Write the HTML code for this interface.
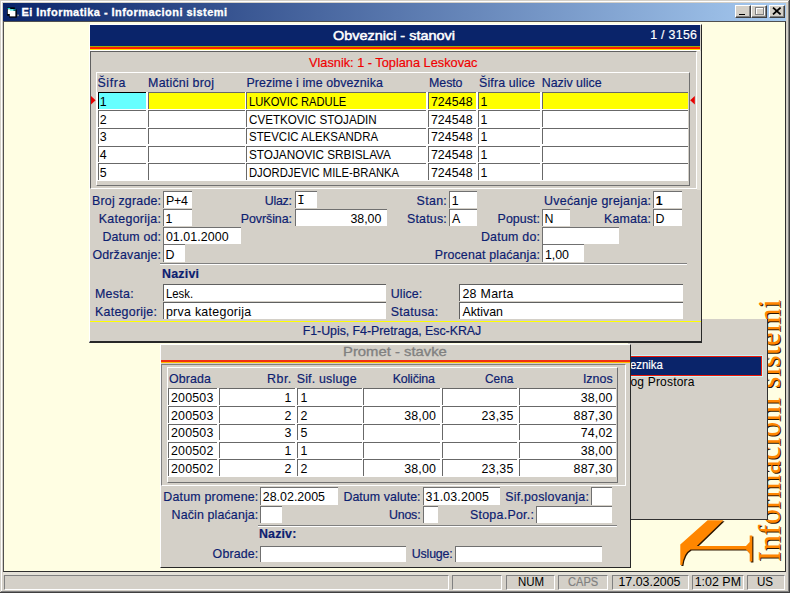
<!DOCTYPE html>
<html><head><meta charset="utf-8"><title>Ei Informatika - Informacioni sistemi</title>
<style>
html,body{margin:0;padding:0}
body{width:790px;height:593px;overflow:hidden;background:#d4d0c8;position:relative;font-family:'Liberation Sans',sans-serif;font-size:12.4px}
div{position:absolute;box-sizing:border-box;white-space:nowrap}
.t{line-height:1;-webkit-text-stroke:0.18px}
.k{-webkit-text-stroke:0}
</style></head><body>
<div style="left:0px;top:0px;width:790px;height:593px;background:#d4d0c8;"></div>
<div style="left:1px;top:1px;width:788px;height:1px;background:#fff;"></div>
<div style="left:1px;top:1px;width:1px;height:591px;background:#fff;"></div>
<div style="left:789px;top:0px;width:1px;height:593px;background:#404040;"></div>
<div style="left:0px;top:592px;width:790px;height:1px;background:#404040;"></div>
<div style="left:788px;top:1px;width:1px;height:591px;background:#808080;"></div>
<div style="left:1px;top:591px;width:788px;height:1px;background:#808080;"></div>
<div style="left:3px;top:3px;width:783px;height:18px;background:linear-gradient(to right,#0a246a 0%,#a6caf0 100%);"></div>
<svg style="position:absolute;left:6px;top:6px" width="15" height="13" viewBox="6 6 15 13"><rect x="7.2" y="7.4" width="7.6" height="8.4" fill="#000"/><rect x="9.2" y="9.4" width="7.6" height="8.2" fill="#000"/><rect x="7.8" y="9.2" width="5.6" height="4.8" fill="#fff"/><rect x="9.8" y="11" width="5.6" height="5.4" fill="#fff"/><rect x="7.6" y="7.9" width="2.6" height="1" fill="#20e8e8"/><rect x="10" y="9.4" width="5.6" height="1.1" fill="#20e8e8"/><rect x="17.3" y="14.6" width="1.6" height="1.6" fill="#a0a090"/></svg>
<div class="t" style="left:21.4px;top:6.7px;color:#fff;font-size:11px;font-weight:bold;letter-spacing:0.45px;-webkit-text-stroke:0.3px;">Ei Informatika - Informacioni sistemi</div>
<div style="left:735.2px;top:4.8px;width:15.6px;height:13.2px;background:#d4d0c8;border-top:1px solid #fff;border-left:1px solid #fff;border-right:1px solid #404040;border-bottom:1px solid #404040;"></div>
<div style="left:736.2px;top:5.8px;width:13.6px;height:11.2px;border-right:1px solid #808080;border-bottom:1px solid #808080;"></div>
<div style="left:739.4000000000001px;top:13.5px;width:6px;height:1.9px;background:#000;"></div>
<div style="left:750.9px;top:4.8px;width:15.7px;height:13.2px;background:#d4d0c8;border-top:1px solid #fff;border-left:1px solid #fff;border-right:1px solid #404040;border-bottom:1px solid #404040;"></div>
<div style="left:751.9px;top:5.8px;width:13.7px;height:11.2px;border-right:1px solid #808080;border-bottom:1px solid #808080;"></div>
<div style="left:755.5px;top:7.8px;width:9px;height:7.6px;border:1px solid #fff;"></div>
<div style="left:754.6px;top:7px;width:9px;height:7.8px;border:1px solid #808080;border-top:1.8px solid #808080;"></div>
<div style="left:769px;top:4.8px;width:15.7px;height:13.2px;background:#d4d0c8;border-top:1px solid #fff;border-left:1px solid #fff;border-right:1px solid #404040;border-bottom:1px solid #404040;"></div>
<div style="left:770px;top:5.8px;width:13.7px;height:11.2px;border-right:1px solid #808080;border-bottom:1px solid #808080;"></div>
<svg style="position:absolute;left:772.2px;top:7.3px" width="10" height="8" viewBox="0 0 10 8"><path d="M1 0.6 L8.6 7.4 M8.6 0.6 L1 7.4" stroke="#000" stroke-width="1.8"/></svg>
<div style="left:3px;top:21px;width:783.1px;height:550.8px;background:#fffee3;border-top:1.3px solid #505050;border-left:1.1px solid #505050;border-right:1.1px solid #303030;border-bottom:0.9px solid #303030;"></div>
<div style="left:3px;top:571.8px;width:783px;height:2.8px;background:#e4e1d8;"></div>
<div style="left:753px;top:561px;transform-origin:0 0;transform:rotate(-90deg) scale(1,1.07);font-family:'Liberation Serif',serif;font-size:30px;line-height:30px;height:30px;color:#ff8600;text-shadow:-1px 1.1px 0 #2e1600;letter-spacing:0.66px">Informacioni sistemi</div>
<svg style="position:absolute;left:670px;top:510px" width="95" height="62" viewBox="670 510 95 62"><path fill="#2e1600" transform="translate(1.1,1)" d="M707.6 520.3 L723.5 520.3 L696.8 546 L746 546 L749.7 542 L749.7 535.4 L752.3 535.4 L752.3 561.6 L749.7 561.6 L749.7 553.5 L746 549.4 L690.5 549.4 Q683.8 553 682.3 565 L680.3 565 L680.3 544.5 Z"/><path fill="#ff8600" d="M707.6 520.3 L723.5 520.3 L696.8 546 L746 546 L749.7 542 L749.7 535.4 L752.3 535.4 L752.3 561.6 L749.7 561.6 L749.7 553.5 L746 549.4 L690.5 549.4 Q683.8 553 682.3 565 L680.3 565 L680.3 544.5 Z"/></svg>
<div style="left:628px;top:318.8px;width:139.6px;height:201.5px;background:#d4d0c8;border-right:1.6px solid #303030;border-bottom:1.6px solid #303030;"></div>
<div style="left:628px;top:354.6px;width:134.8px;height:22px;background:#c8f4f4;"></div>
<div style="left:628px;top:355.5px;width:134px;height:20.2px;background:#0a246a;border:1.2px solid #f01808;"></div>
<div class="t" style="left:630.4px;top:359.1px;color:#fff;font-size:12px;transform-origin:0 0;transform:scaleX(0.948);">eznika</div>
<div class="t k" style="left:630.4px;top:376.4px;color:#000;font-size:12px;letter-spacing:0.20px;">og Prostora</div>
<div style="left:159.7px;top:343.5px;width:471.6px;height:224.3px;background:#d4d0c8;border-left:1px solid #fff;border-top:1px solid #fff;border-right:1.7px solid #282828;border-bottom:1.6px solid #282828;"></div>
<div class="t" style="left:342.6px;top:346.0px;color:#808080;-webkit-text-stroke:0.3px;transform-origin:0 0;transform:scaleX(1.197);">Promet - stavke</div>
<div style="left:160.5px;top:360.3px;width:469px;height:1.7px;background:#f03010;"></div>
<div style="left:160.5px;top:362px;width:469px;height:1px;background:#ffc000;"></div>
<div style="left:161.4px;top:363.6px;width:464.4px;height:122.2px;background:#d4d0c8;border-top:1px solid #808080;border-left:1px solid #808080;border-right:1px solid #fff;border-bottom:1px solid #fff;"></div>
<div style="left:166.8px;top:366.5px;width:451.4px;height:116.2px;background:#d4d0c8;border-top:1px solid #fff;border-left:1px solid #fff;border-right:1px solid #707070;border-bottom:1px solid #707070;"></div>
<div class="t" style="left:169.1px;top:373.0px;color:#0c2070;letter-spacing:0.07px;">Obrada</div>
<div class="t" style="left:267.1px;top:373.0px;color:#0c2070;letter-spacing:0.49px;">Rbr.</div>
<div class="t" style="left:296.7px;top:373.0px;color:#0c2070;letter-spacing:0.20px;">Sif. usluge</div>
<div class="t" style="left:392.7px;top:373.0px;color:#0c2070;letter-spacing:-0.16px;">Količina</div>
<div class="t" style="left:485.1px;top:373.0px;color:#0c2070;transform-origin:0 0;transform:scaleX(0.959);">Cena</div>
<div class="t" style="left:582.9px;top:373.0px;color:#0c2070;letter-spacing:0.04px;">Iznos</div>
<div style="left:167.8px;top:387.8px;width:448.4px;height:89.4px;background:#fff;"></div>
<div style="left:168.2px;top:388.3px;width:48.8px;height:16.6px;background:#fff;border-top:1px solid #686868;border-left:1px solid #686868;"></div>
<div class="t k" style="left:171.0px;top:391.7px;color:#000;letter-spacing:0.20px;">200503</div>
<div style="left:218.9px;top:388.3px;width:75.9px;height:16.6px;background:#fff;border-top:1px solid #686868;border-left:1px solid #686868;"></div>
<div class="t k" style="right:498.3px;top:391.7px;color:#000;letter-spacing:0.20px;">1</div>
<div style="left:296.8px;top:388.3px;width:64.8px;height:16.6px;background:#fff;border-top:1px solid #686868;border-left:1px solid #686868;"></div>
<div class="t k" style="left:300.5px;top:391.7px;color:#000;letter-spacing:0.20px;">1</div>
<div style="left:363.4px;top:388.3px;width:76.6px;height:16.6px;background:#fff;border-top:1px solid #686868;border-left:1px solid #686868;"></div>
<div style="left:442px;top:388.3px;width:75.3px;height:16.6px;background:#fff;border-top:1px solid #686868;border-left:1px solid #686868;"></div>
<div style="left:519.2px;top:388.3px;width:97.3px;height:16.6px;background:#fff;border-top:1px solid #686868;border-left:1px solid #686868;"></div>
<div class="t k" style="right:177.3px;top:391.7px;color:#000;letter-spacing:0.20px;">38,00</div>
<div style="left:168.2px;top:406.08000000000004px;width:48.8px;height:16.6px;background:#fff;border-top:1px solid #686868;border-left:1px solid #686868;"></div>
<div class="t k" style="left:171.0px;top:409.5px;color:#000;letter-spacing:0.20px;">200503</div>
<div style="left:218.9px;top:406.08000000000004px;width:75.9px;height:16.6px;background:#fff;border-top:1px solid #686868;border-left:1px solid #686868;"></div>
<div class="t k" style="right:498.3px;top:409.5px;color:#000;letter-spacing:0.20px;">2</div>
<div style="left:296.8px;top:406.08000000000004px;width:64.8px;height:16.6px;background:#fff;border-top:1px solid #686868;border-left:1px solid #686868;"></div>
<div class="t k" style="left:300.5px;top:409.5px;color:#000;letter-spacing:0.20px;">2</div>
<div style="left:363.4px;top:406.08000000000004px;width:76.6px;height:16.6px;background:#fff;border-top:1px solid #686868;border-left:1px solid #686868;"></div>
<div class="t k" style="right:353.8px;top:409.5px;color:#000;letter-spacing:0.20px;">38,00</div>
<div style="left:442px;top:406.08000000000004px;width:75.3px;height:16.6px;background:#fff;border-top:1px solid #686868;border-left:1px solid #686868;"></div>
<div class="t k" style="right:276.5px;top:409.5px;color:#000;letter-spacing:0.20px;">23,35</div>
<div style="left:519.2px;top:406.08000000000004px;width:97.3px;height:16.6px;background:#fff;border-top:1px solid #686868;border-left:1px solid #686868;"></div>
<div class="t k" style="right:177.3px;top:409.5px;color:#000;letter-spacing:0.20px;">887,30</div>
<div style="left:168.2px;top:423.86px;width:48.8px;height:16.6px;background:#fff;border-top:1px solid #686868;border-left:1px solid #686868;"></div>
<div class="t k" style="left:171.0px;top:427.3px;color:#000;letter-spacing:0.20px;">200503</div>
<div style="left:218.9px;top:423.86px;width:75.9px;height:16.6px;background:#fff;border-top:1px solid #686868;border-left:1px solid #686868;"></div>
<div class="t k" style="right:498.3px;top:427.3px;color:#000;letter-spacing:0.20px;">3</div>
<div style="left:296.8px;top:423.86px;width:64.8px;height:16.6px;background:#fff;border-top:1px solid #686868;border-left:1px solid #686868;"></div>
<div class="t k" style="left:300.5px;top:427.3px;color:#000;letter-spacing:0.20px;">5</div>
<div style="left:363.4px;top:423.86px;width:76.6px;height:16.6px;background:#fff;border-top:1px solid #686868;border-left:1px solid #686868;"></div>
<div style="left:442px;top:423.86px;width:75.3px;height:16.6px;background:#fff;border-top:1px solid #686868;border-left:1px solid #686868;"></div>
<div style="left:519.2px;top:423.86px;width:97.3px;height:16.6px;background:#fff;border-top:1px solid #686868;border-left:1px solid #686868;"></div>
<div class="t k" style="right:177.3px;top:427.3px;color:#000;letter-spacing:0.20px;">74,02</div>
<div style="left:168.2px;top:441.64px;width:48.8px;height:16.6px;background:#fff;border-top:1px solid #686868;border-left:1px solid #686868;"></div>
<div class="t k" style="left:171.0px;top:445.0px;color:#000;letter-spacing:0.20px;">200502</div>
<div style="left:218.9px;top:441.64px;width:75.9px;height:16.6px;background:#fff;border-top:1px solid #686868;border-left:1px solid #686868;"></div>
<div class="t k" style="right:498.3px;top:445.0px;color:#000;letter-spacing:0.20px;">1</div>
<div style="left:296.8px;top:441.64px;width:64.8px;height:16.6px;background:#fff;border-top:1px solid #686868;border-left:1px solid #686868;"></div>
<div class="t k" style="left:300.5px;top:445.0px;color:#000;letter-spacing:0.20px;">1</div>
<div style="left:363.4px;top:441.64px;width:76.6px;height:16.6px;background:#fff;border-top:1px solid #686868;border-left:1px solid #686868;"></div>
<div style="left:442px;top:441.64px;width:75.3px;height:16.6px;background:#fff;border-top:1px solid #686868;border-left:1px solid #686868;"></div>
<div style="left:519.2px;top:441.64px;width:97.3px;height:16.6px;background:#fff;border-top:1px solid #686868;border-left:1px solid #686868;"></div>
<div class="t k" style="right:177.3px;top:445.0px;color:#000;letter-spacing:0.20px;">38,00</div>
<div style="left:168.2px;top:459.42px;width:48.8px;height:16.6px;background:#fff;border-top:1px solid #686868;border-left:1px solid #686868;"></div>
<div class="t k" style="left:171.0px;top:462.8px;color:#000;letter-spacing:0.20px;">200502</div>
<div style="left:218.9px;top:459.42px;width:75.9px;height:16.6px;background:#fff;border-top:1px solid #686868;border-left:1px solid #686868;"></div>
<div class="t k" style="right:498.3px;top:462.8px;color:#000;letter-spacing:0.20px;">2</div>
<div style="left:296.8px;top:459.42px;width:64.8px;height:16.6px;background:#fff;border-top:1px solid #686868;border-left:1px solid #686868;"></div>
<div class="t k" style="left:300.5px;top:462.8px;color:#000;letter-spacing:0.20px;">2</div>
<div style="left:363.4px;top:459.42px;width:76.6px;height:16.6px;background:#fff;border-top:1px solid #686868;border-left:1px solid #686868;"></div>
<div class="t k" style="right:353.8px;top:462.8px;color:#000;letter-spacing:0.20px;">38,00</div>
<div style="left:442px;top:459.42px;width:75.3px;height:16.6px;background:#fff;border-top:1px solid #686868;border-left:1px solid #686868;"></div>
<div class="t k" style="right:276.5px;top:462.8px;color:#000;letter-spacing:0.20px;">23,35</div>
<div style="left:519.2px;top:459.42px;width:97.3px;height:16.6px;background:#fff;border-top:1px solid #686868;border-left:1px solid #686868;"></div>
<div class="t k" style="right:177.3px;top:462.8px;color:#000;letter-spacing:0.20px;">887,30</div>
<div class="t" style="left:163.3px;top:491.1px;color:#0c2070;letter-spacing:0.21px;">Datum promene:</div>
<div style="left:260px;top:487px;width:77.8px;height:17.7px;background:#fff;border-top:1px solid #707070;border-left:1px solid #707070;"></div>
<div class="t k" style="left:262.8px;top:491.1px;color:#000;letter-spacing:0.02px;">28.02.2005</div>
<div class="t" style="left:343.4px;top:491.1px;color:#0c2070;letter-spacing:0.06px;">Datum valute:</div>
<div style="left:423.2px;top:487px;width:76.8px;height:17.7px;background:#fff;border-top:1px solid #707070;border-left:1px solid #707070;"></div>
<div class="t k" style="left:425.6px;top:491.1px;color:#000;letter-spacing:0.15px;">31.03.2005</div>
<div class="t" style="left:505.2px;top:491.1px;color:#0c2070;letter-spacing:0.22px;">Sif.poslovanja:</div>
<div style="left:590.9px;top:487px;width:21.5px;height:17.7px;background:#fff;border-top:1px solid #707070;border-left:1px solid #707070;"></div>
<div class="t" style="left:171.6px;top:509.0px;color:#0c2070;letter-spacing:0.14px;">Način plaćanja:</div>
<div style="left:260px;top:505.6px;width:21.6px;height:17.0px;background:#fff;border-top:1px solid #707070;border-left:1px solid #707070;"></div>
<div class="t" style="left:388.9px;top:509.0px;color:#0c2070;letter-spacing:-0.17px;">Unos:</div>
<div style="left:423.2px;top:505.6px;width:15.2px;height:17.0px;background:#fff;border-top:1px solid #707070;border-left:1px solid #707070;"></div>
<div class="t" style="left:469.9px;top:509.0px;color:#0c2070;letter-spacing:0.28px;">Stopa.Por.:</div>
<div style="left:535.7px;top:505.6px;width:76.7px;height:17.0px;background:#fff;border-top:1px solid #707070;border-left:1px solid #707070;"></div>
<div style="left:257.5px;top:524.6px;width:359px;height:1px;background:#808080;"></div>
<div style="left:257.5px;top:525.6px;width:359px;height:1px;background:#fff;"></div>
<div class="t" style="left:259.0px;top:528.3px;color:#0c2070;font-weight:bold;letter-spacing:0.16px;">Naziv:</div>
<div class="t" style="left:212.6px;top:548.0px;color:#0c2070;letter-spacing:0.15px;">Obrade:</div>
<div style="left:260px;top:545.6px;width:146.0px;height:16.0px;background:#fff;border-top:1px solid #707070;border-left:1px solid #707070;"></div>
<div class="t" style="left:411.7px;top:548.0px;color:#0c2070;letter-spacing:-0.15px;">Usluge:</div>
<div style="left:455.3px;top:545.6px;width:146.7px;height:16.0px;background:#fff;border-top:1px solid #707070;border-left:1px solid #707070;"></div>
<div style="left:89px;top:24px;width:613.4px;height:319.4px;background:#d4d0c8;border-left:1px solid #fff;border-top:1px solid #fff;border-right:1.7px solid #282828;border-bottom:2px solid #282828;"></div>
<div style="left:90px;top:25px;width:610.4px;height:21.2px;background:#0a246a;"></div>
<div class="t" style="left:333.1px;top:28.7px;color:#fff;font-size:13px;-webkit-text-stroke:0.5px;transform-origin:0 0;transform:scaleX(1.110);">Obveznici - stanovi</div>
<div class="t" style="left:650.2px;top:29.0px;color:#fff;letter-spacing:0.29px;">1 / 3156</div>
<div style="left:90px;top:45.9px;width:610.4px;height:0.7px;background:#a0b000;"></div>
<div style="left:90px;top:46.5px;width:610.4px;height:2.2px;background:#ff2000;"></div>
<div style="left:90px;top:48.7px;width:610.4px;height:0.9px;background:#ffe000;"></div>
<div style="left:90px;top:49.6px;width:610.4px;height:1px;background:#fff;"></div>
<div style="left:696.5px;top:50.5px;width:4.2px;height:139px;background:#e4e1d8;"></div>
<div style="left:90.3px;top:50.8px;width:606.5px;height:138.2px;background:#d4d0c8;border-top:1px solid #606060;border-left:1px solid #606060;border-right:1px solid #fff;border-bottom:1px solid #fff;"></div>
<div class="t" style="left:309.0px;top:56.8px;color:#f00000;font-size:12.8px;letter-spacing:-0.02px;">Vlasnik: 1 - Toplana Leskovac</div>
<div style="left:96px;top:72px;width:593.6px;height:113.7px;background:#d4d0c8;border-top:1px solid #fff;border-left:1px solid #fff;border-right:1px solid #707070;border-bottom:1px solid #707070;"></div>
<div class="t" style="left:97.5px;top:76.5px;color:#0c2070;letter-spacing:0.60px;">Šifra</div>
<div class="t" style="left:148.1px;top:76.5px;color:#0c2070;letter-spacing:0.23px;">Matični broj</div>
<div class="t" style="left:246.4px;top:76.5px;color:#0c2070;letter-spacing:0.10px;">Prezime i ime obveznika</div>
<div class="t" style="left:429.1px;top:76.5px;color:#0c2070;letter-spacing:-0.09px;">Mesto</div>
<div class="t" style="left:479.1px;top:76.5px;color:#0c2070;letter-spacing:0.13px;">Šifra ulice</div>
<div class="t" style="left:541.7px;top:76.5px;color:#0c2070;">Naziv ulice</div>
<div style="left:97px;top:92px;width:591.2px;height:89px;background:#fff;"></div>
<div style="left:97.5px;top:92.4px;width:48.5px;height:16.7px;background:#66ffff;border-top:1px solid #000;border-left:1px solid #000;"></div>
<div style="left:147.8px;top:92.4px;width:97.2px;height:16.7px;background:#ffff00;border-top:1px solid #686868;border-left:1px solid #686868;"></div>
<div style="left:246.3px;top:92.4px;width:179.9px;height:16.7px;background:#ffff00;border-top:1px solid #686868;border-left:1px solid #686868;"></div>
<div style="left:428.3px;top:92.4px;width:47.5px;height:16.7px;background:#ffff00;border-top:1px solid #686868;border-left:1px solid #686868;"></div>
<div style="left:477.6px;top:92.4px;width:62.4px;height:16.7px;background:#ffff00;border-top:1px solid #686868;border-left:1px solid #686868;"></div>
<div style="left:541.6px;top:92.4px;width:146.4px;height:16.7px;background:#ffff00;border-top:1px solid #686868;border-left:1px solid #686868;"></div>
<div class="t k" style="left:99.7px;top:95.9px;color:#000;">1</div>
<div class="t k" style="left:249.0px;top:95.9px;color:#000;transform-origin:0 0;transform:scaleX(0.900);">LUKOVIC RADULE</div>
<div class="t k" style="left:430.9px;top:95.9px;color:#000;letter-spacing:0.07px;">724548</div>
<div class="t k" style="left:480.4px;top:95.9px;color:#000;">1</div>
<div style="left:97.5px;top:110.10000000000001px;width:48.5px;height:16.7px;background:#fff;border-top:1px solid #686868;border-left:1px solid #686868;"></div>
<div style="left:147.8px;top:110.10000000000001px;width:97.2px;height:16.7px;background:#fff;border-top:1px solid #686868;border-left:1px solid #686868;"></div>
<div style="left:246.3px;top:110.10000000000001px;width:179.9px;height:16.7px;background:#fff;border-top:1px solid #686868;border-left:1px solid #686868;"></div>
<div style="left:428.3px;top:110.10000000000001px;width:47.5px;height:16.7px;background:#fff;border-top:1px solid #686868;border-left:1px solid #686868;"></div>
<div style="left:477.6px;top:110.10000000000001px;width:62.4px;height:16.7px;background:#fff;border-top:1px solid #686868;border-left:1px solid #686868;"></div>
<div style="left:541.6px;top:110.10000000000001px;width:146.4px;height:16.7px;background:#fff;border-top:1px solid #686868;border-left:1px solid #686868;"></div>
<div class="t k" style="left:99.7px;top:113.6px;color:#000;">2</div>
<div class="t k" style="left:249.0px;top:113.6px;color:#000;transform-origin:0 0;transform:scaleX(0.938);">CVETKOVIC STOJADIN</div>
<div class="t k" style="left:430.9px;top:113.6px;color:#000;letter-spacing:0.07px;">724548</div>
<div class="t k" style="left:480.4px;top:113.6px;color:#000;">1</div>
<div style="left:97.5px;top:127.80000000000001px;width:48.5px;height:16.7px;background:#fff;border-top:1px solid #686868;border-left:1px solid #686868;"></div>
<div style="left:147.8px;top:127.80000000000001px;width:97.2px;height:16.7px;background:#fff;border-top:1px solid #686868;border-left:1px solid #686868;"></div>
<div style="left:246.3px;top:127.80000000000001px;width:179.9px;height:16.7px;background:#fff;border-top:1px solid #686868;border-left:1px solid #686868;"></div>
<div style="left:428.3px;top:127.80000000000001px;width:47.5px;height:16.7px;background:#fff;border-top:1px solid #686868;border-left:1px solid #686868;"></div>
<div style="left:477.6px;top:127.80000000000001px;width:62.4px;height:16.7px;background:#fff;border-top:1px solid #686868;border-left:1px solid #686868;"></div>
<div style="left:541.6px;top:127.80000000000001px;width:146.4px;height:16.7px;background:#fff;border-top:1px solid #686868;border-left:1px solid #686868;"></div>
<div class="t k" style="left:99.7px;top:131.3px;color:#000;">3</div>
<div class="t k" style="left:249.0px;top:131.3px;color:#000;transform-origin:0 0;transform:scaleX(0.923);">STEVCIC ALEKSANDRA</div>
<div class="t k" style="left:430.9px;top:131.3px;color:#000;letter-spacing:0.07px;">724548</div>
<div class="t k" style="left:480.4px;top:131.3px;color:#000;">1</div>
<div style="left:97.5px;top:145.5px;width:48.5px;height:16.7px;background:#fff;border-top:1px solid #686868;border-left:1px solid #686868;"></div>
<div style="left:147.8px;top:145.5px;width:97.2px;height:16.7px;background:#fff;border-top:1px solid #686868;border-left:1px solid #686868;"></div>
<div style="left:246.3px;top:145.5px;width:179.9px;height:16.7px;background:#fff;border-top:1px solid #686868;border-left:1px solid #686868;"></div>
<div style="left:428.3px;top:145.5px;width:47.5px;height:16.7px;background:#fff;border-top:1px solid #686868;border-left:1px solid #686868;"></div>
<div style="left:477.6px;top:145.5px;width:62.4px;height:16.7px;background:#fff;border-top:1px solid #686868;border-left:1px solid #686868;"></div>
<div style="left:541.6px;top:145.5px;width:146.4px;height:16.7px;background:#fff;border-top:1px solid #686868;border-left:1px solid #686868;"></div>
<div class="t k" style="left:99.7px;top:149.0px;color:#000;">4</div>
<div class="t k" style="left:249.0px;top:149.0px;color:#000;transform-origin:0 0;transform:scaleX(0.950);">STOJANOVIC SRBISLAVA</div>
<div class="t k" style="left:430.9px;top:149.0px;color:#000;letter-spacing:0.07px;">724548</div>
<div class="t k" style="left:480.4px;top:149.0px;color:#000;">1</div>
<div style="left:97.5px;top:163.2px;width:48.5px;height:16.7px;background:#fff;border-top:1px solid #686868;border-left:1px solid #686868;"></div>
<div style="left:147.8px;top:163.2px;width:97.2px;height:16.7px;background:#fff;border-top:1px solid #686868;border-left:1px solid #686868;"></div>
<div style="left:246.3px;top:163.2px;width:179.9px;height:16.7px;background:#fff;border-top:1px solid #686868;border-left:1px solid #686868;"></div>
<div style="left:428.3px;top:163.2px;width:47.5px;height:16.7px;background:#fff;border-top:1px solid #686868;border-left:1px solid #686868;"></div>
<div style="left:477.6px;top:163.2px;width:62.4px;height:16.7px;background:#fff;border-top:1px solid #686868;border-left:1px solid #686868;"></div>
<div style="left:541.6px;top:163.2px;width:146.4px;height:16.7px;background:#fff;border-top:1px solid #686868;border-left:1px solid #686868;"></div>
<div class="t k" style="left:99.7px;top:166.7px;color:#000;">5</div>
<div class="t k" style="left:249.0px;top:166.7px;color:#000;transform-origin:0 0;transform:scaleX(0.908);">DJORDJEVIC MILE-BRANKA</div>
<div class="t k" style="left:430.9px;top:166.7px;color:#000;letter-spacing:0.07px;">724548</div>
<div class="t k" style="left:480.4px;top:166.7px;color:#000;">1</div>
<svg style="position:absolute;left:91px;top:96.3px" width="5" height="9" viewBox="0 0 5 9"><path d="M0 0 L4.6 4.3 L0 8.6 Z" fill="#e80000"/></svg>
<svg style="position:absolute;left:690px;top:96.3px" width="5" height="9" viewBox="0 0 5 9"><path d="M4.8 0 L0.2 4.3 L4.8 8.6 Z" fill="#e80000"/></svg>
<div class="t" style="left:92.0px;top:195.1px;color:#0c2070;letter-spacing:0.20px;">Broj zgrade:</div>
<div style="left:162.7px;top:190.7px;width:29.8px;height:17.3px;background:#fff;border-top:1px solid #707070;border-left:1px solid #707070;"></div>
<div class="t k" style="left:165.9px;top:195.1px;color:#000;letter-spacing:-0.15px;">P+4</div>
<div class="t" style="left:264.8px;top:195.1px;color:#0c2070;letter-spacing:-0.26px;">Ulaz:</div>
<div style="left:294.5px;top:190.7px;width:22.3px;height:17.3px;background:#fff;border-top:1px solid #707070;border-left:1px solid #707070;"></div>
<div class="t k" style="left:297.2px;top:195.1px;color:#000;font-family:'Liberation Mono',monospace;">I</div>
<div class="t" style="left:416.6px;top:195.1px;color:#0c2070;letter-spacing:0.32px;">Stan:</div>
<div style="left:448.9px;top:190.7px;width:28.5px;height:17.3px;background:#fff;border-top:1px solid #707070;border-left:1px solid #707070;"></div>
<div class="t k" style="left:451.7px;top:195.1px;color:#000;">1</div>
<div class="t" style="left:544.1px;top:195.1px;color:#0c2070;letter-spacing:0.25px;">Uvećanje grejanja:</div>
<div style="left:652.8px;top:190.7px;width:29.2px;height:17.3px;background:#fff;border-top:1px solid #707070;border-left:1px solid #707070;"></div>
<div class="t k" style="left:655.7px;top:195.1px;color:#000;font-weight:bold;">1</div>
<div class="t" style="left:98.8px;top:213.0px;color:#0c2070;letter-spacing:0.29px;">Kategorija:</div>
<div style="left:162.7px;top:208.6px;width:29.8px;height:17.3px;background:#fff;border-top:1px solid #707070;border-left:1px solid #707070;"></div>
<div class="t k" style="left:165.4px;top:213.0px;color:#000;">1</div>
<div class="t" style="left:240.8px;top:213.0px;color:#0c2070;letter-spacing:-0.06px;">Površina:</div>
<div style="left:294.5px;top:208.6px;width:92.0px;height:17.3px;background:#fff;border-top:1px solid #707070;border-left:1px solid #707070;"></div>
<div class="t k" style="left:350.4px;top:213.0px;color:#000;">38,00</div>
<div class="t" style="left:407.0px;top:213.0px;color:#0c2070;letter-spacing:0.20px;">Status:</div>
<div style="left:448.9px;top:208.6px;width:28.5px;height:17.3px;background:#fff;border-top:1px solid #707070;border-left:1px solid #707070;"></div>
<div class="t k" style="left:451.9px;top:213.0px;color:#000;">A</div>
<div class="t" style="left:497.6px;top:213.0px;color:#0c2070;letter-spacing:0.06px;">Popust:</div>
<div style="left:541.8px;top:208.6px;width:28.2px;height:17.3px;background:#fff;border-top:1px solid #707070;border-left:1px solid #707070;"></div>
<div class="t k" style="left:544.4px;top:213.0px;color:#000;">N</div>
<div class="t" style="left:604.1px;top:213.0px;color:#0c2070;letter-spacing:0.12px;">Kamata:</div>
<div style="left:652.8px;top:208.6px;width:29.2px;height:17.3px;background:#fff;border-top:1px solid #707070;border-left:1px solid #707070;"></div>
<div class="t k" style="left:655.4px;top:213.0px;color:#000;">D</div>
<div class="t" style="left:102.4px;top:230.8px;color:#0c2070;letter-spacing:0.18px;">Datum od:</div>
<div style="left:162.7px;top:226.5px;width:77.9px;height:17.3px;background:#fff;border-top:1px solid #707070;border-left:1px solid #707070;"></div>
<div class="t k" style="left:165.9px;top:230.8px;color:#000;letter-spacing:0.08px;">01.01.2000</div>
<div class="t" style="left:480.9px;top:230.8px;color:#0c2070;letter-spacing:0.24px;">Datum do:</div>
<div style="left:541.8px;top:226.5px;width:76.8px;height:17.3px;background:#fff;border-top:1px solid #707070;border-left:1px solid #707070;"></div>
<div class="t" style="left:92.4px;top:248.6px;color:#0c2070;letter-spacing:0.18px;">Održavanje:</div>
<div style="left:162.7px;top:244.4px;width:22.8px;height:17.3px;background:#fff;border-top:1px solid #707070;border-left:1px solid #707070;"></div>
<div class="t k" style="left:165.4px;top:248.6px;color:#000;">D</div>
<div class="t" style="left:434.8px;top:248.6px;color:#0c2070;letter-spacing:0.15px;">Procenat plaćanja:</div>
<div style="left:541.8px;top:244.4px;width:42.0px;height:17.3px;background:#fff;border-top:1px solid #707070;border-left:1px solid #707070;"></div>
<div class="t k" style="left:545.0px;top:248.6px;color:#000;letter-spacing:-0.04px;">1,00</div>
<div style="left:160px;top:262.7px;width:527px;height:1px;background:#808080;"></div>
<div style="left:160px;top:263.7px;width:527px;height:1px;background:#fff;"></div>
<div class="t" style="left:162.1px;top:267.7px;color:#0c2070;font-weight:bold;letter-spacing:0.22px;">Nazivi</div>
<div class="t" style="left:95.0px;top:288.0px;color:#0c2070;letter-spacing:0.28px;">Mesta:</div>
<div style="left:162.7px;top:284px;width:223.1px;height:16.7px;background:#fff;border-top:1px solid #606060;border-left:1px solid #606060;"></div>
<div class="t k" style="left:165.9px;top:288.0px;color:#000;transform-origin:0 0;transform:scaleX(0.915);">Lesk.</div>
<div class="t" style="left:390.8px;top:288.0px;color:#0c2070;letter-spacing:0.10px;">Ulice:</div>
<div style="left:459.3px;top:284px;width:223.5px;height:16.7px;background:#fff;border-top:1px solid #606060;border-left:1px solid #606060;"></div>
<div class="t k" style="left:462.4px;top:288.0px;color:#000;letter-spacing:0.30px;">28 Marta</div>
<div class="t" style="left:95.0px;top:305.8px;color:#0c2070;letter-spacing:0.27px;">Kategorije:</div>
<div style="left:162.7px;top:301.8px;width:223.1px;height:16.9px;background:#fff;border-top:1px solid #606060;border-left:1px solid #606060;"></div>
<div class="t k" style="left:165.9px;top:305.8px;color:#000;letter-spacing:0.29px;">prva kategorija</div>
<div class="t" style="left:390.8px;top:305.8px;color:#0c2070;letter-spacing:0.28px;">Statusa:</div>
<div style="left:459.3px;top:301.8px;width:223.5px;height:16.9px;background:#fff;border-top:1px solid #606060;border-left:1px solid #606060;"></div>
<div class="t k" style="left:462.4px;top:305.8px;color:#000;letter-spacing:-0.01px;">Aktivan</div>
<div style="left:90px;top:320.9px;width:610.6px;height:1.4px;background:#ffff00;"></div>
<div class="t" style="left:302.7px;top:324.9px;color:#0c2070;letter-spacing:-0.04px;">F1-Upis, F4-Pretraga, Esc-KRAJ</div>
<div style="left:4px;top:575px;width:444.8px;height:14.7px;background:#d4d0c8;border-top:1px solid #808080;border-left:1px solid #808080;border-right:1px solid #fff;border-bottom:1px solid #fff;"></div>
<div style="left:452.2px;top:575px;width:50.3px;height:14.7px;background:#d4d0c8;border-top:1px solid #808080;border-left:1px solid #808080;border-right:1px solid #fff;border-bottom:1px solid #fff;"></div>
<div style="left:505.9px;top:575px;width:48.8px;height:14.7px;background:#d4d0c8;border-top:1px solid #808080;border-left:1px solid #808080;border-right:1px solid #fff;border-bottom:1px solid #fff;"></div>
<div style="left:558.2px;top:575px;width:50.2px;height:14.7px;background:#d4d0c8;border-top:1px solid #808080;border-left:1px solid #808080;border-right:1px solid #fff;border-bottom:1px solid #fff;"></div>
<div style="left:611.8px;top:575px;width:77.5px;height:14.7px;background:#d4d0c8;border-top:1px solid #808080;border-left:1px solid #808080;border-right:1px solid #fff;border-bottom:1px solid #fff;"></div>
<div style="left:692px;top:575px;width:52.4px;height:14.7px;background:#d4d0c8;border-top:1px solid #808080;border-left:1px solid #808080;border-right:1px solid #fff;border-bottom:1px solid #fff;"></div>
<div style="left:747.4px;top:575px;width:37.9px;height:14.7px;background:#d4d0c8;border-top:1px solid #808080;border-left:1px solid #808080;border-right:1px solid #fff;border-bottom:1px solid #fff;"></div>
<div class="t k" style="left:517.6px;top:575.7px;color:#000;transform-origin:0 0;transform:scaleX(0.928);">NUM</div>
<div class="t" style="left:567.8px;top:575.7px;color:#808080;transform-origin:0 0;transform:scaleX(0.895);">CAPS</div>
<div class="t k" style="left:618.4px;top:575.7px;color:#000;letter-spacing:0.01px;">17.03.2005</div>
<div class="t k" style="left:694.7px;top:575.7px;color:#000;letter-spacing:0.02px;">1:02 PM</div>
<div class="t k" style="left:757.1px;top:575.7px;color:#000;transform-origin:0 0;transform:scaleX(0.935);">US</div>
</body></html>
